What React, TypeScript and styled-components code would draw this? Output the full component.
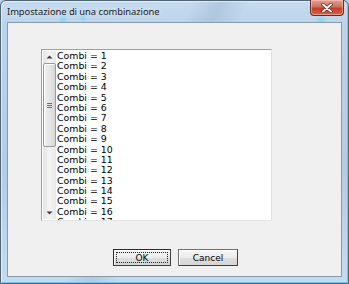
import styled, { createGlobalStyle } from "styled-components";

const GlobalStyle = createGlobalStyle`
  html, body {
    margin: 0;
    padding: 0;
    background: #b7cfe6;
  }
  #root {
    width: 349px;
    height: 284px;
  }
`;

const Window = styled.div`
  box-sizing: border-box;
  width: 349px;
  height: 284px;
  display: flex;
  flex-direction: column;
  padding: 0 6px 6px 6px;
  border: 1px solid #4f6475;
  border-radius: 6px 6px 0 0;
  background:
    radial-gradient(circle at 62px 19px, rgba(60, 220, 250, 0.55) 0, rgba(60, 220, 250, 0) 5px),
    radial-gradient(circle at 82px 17px, rgba(60, 220, 250, 0.5) 0, rgba(60, 220, 250, 0) 4px),
    radial-gradient(circle at 320px 20px, rgba(60, 220, 250, 0.5) 0, rgba(60, 220, 250, 0) 6px),
    linear-gradient(115deg, rgba(255, 255, 255, 0) 40%, rgba(140, 170, 200, 0.35) 46%, rgba(255, 255, 255, 0) 52%),
    linear-gradient(180deg, #c6dbee 0%, #bcd4ea 8%, #b3cde5 60%, #c5dbef 100%);
  box-shadow: inset 1px 1px 0 rgba(255, 255, 255, 0.55), inset -1px -1px 0 #6fc6ee;
`;

const TitleBar = styled.div`
  height: 21px;
  display: flex;
  align-items: flex-start;
  justify-content: space-between;
`;

const Title = styled.span`
  margin-top: 4px;
  font-family: "Noto Sans", "Open Sans", sans-serif;
  font-size: 9.4px;
  color: #1b1b1b;
  letter-spacing: -0.05px;
  text-shadow: 0 0 6px rgba(255, 255, 255, 0.9);
`;

const CloseButton = styled.div`
  box-sizing: border-box;
  width: 34px;
  height: 16px;
  margin-top: -1px;
  margin-right: -2px;
  display: flex;
  align-items: center;
  justify-content: center;
  border: 1px solid #6b2a22;
  border-top: none;
  border-radius: 0 0 4px 4px;
  background: linear-gradient(180deg, #e3a091 0%, #d0705d 45%, #c23f2a 55%, #d5644a 100%);
  box-shadow: inset 0 0 0 1px rgba(255, 210, 200, 0.5);
`;

const Client = styled.div`
  flex: 1;
  box-sizing: border-box;
  display: flex;
  flex-direction: column;
  border: 1px solid #8a9aa8;
  background: #f0f0f0;
  padding: 26px 0 0 33px;
`;

const ListBox = styled.div`
  box-sizing: border-box;
  width: 231px;
  height: 172px;
  display: flex;
  border-style: solid;
  border-width: 1px;
  border-color: #a0a0a0 #e3e3e3 #e3e3e3 #a0a0a0;
  background: #ffffff;
  padding: 1px;
  overflow: hidden;
`;

const ScrollBar = styled.div`
  width: 13px;
  flex: none;
  display: flex;
  flex-direction: column;
  background: linear-gradient(90deg, #e4e4e4 0%, #f4f4f4 50%, #e8e8e8 100%);
`;

const ArrowButton = styled.div`
  height: 12px;
  flex: none;
  display: flex;
  align-items: center;
  justify-content: center;
`;

const Thumb = styled.div`
  box-sizing: border-box;
  height: 84px;
  display: flex;
  align-items: center;
  justify-content: center;
  border: 1px solid #9a9a9a;
  border-radius: 2px;
  background: linear-gradient(90deg, #f2f2f2 0%, #e6e6e6 50%, #d6d6d6 100%);
  box-shadow: inset 1px 1px 0 #ffffff;
`;

const Track = styled.div`
  flex: 1;
`;

const Items = styled.div`
  flex: 1;
  padding-left: 1px;
  display: flex;
  flex-direction: column;
`;

const Item = styled.div`
  height: 10.4px;
  line-height: 10.4px;
  font-family: "DejaVu Sans", "Liberation Sans", sans-serif;
  font-size: 9.4px;
  color: #000000;
  white-space: nowrap;
`;

const ButtonRow = styled.div`
  display: flex;
  gap: 7px;
  margin-top: 28px;
  padding-left: 72px;
`;

const Button = styled.div<{ $default?: boolean; $width: number }>`
  box-sizing: border-box;
  width: ${(p) => p.$width}px;
  height: 17px;
  display: flex;
  align-items: center;
  justify-content: center;
  font-family: "DejaVu Sans", "Liberation Sans", sans-serif;
  font-size: 9px;
  color: #000000;
  border: 1px solid ${(p) => (p.$default ? "#2b2b2b" : "#707070")};
  border-right-color: #404040;
  border-bottom-color: #404040;
  background: linear-gradient(180deg, #f6f6f6 0%, #ececec 50%, #dedede 51%, #d6d6d6 100%);
  box-shadow: inset 1px 1px 0 #ffffff;
  position: relative;
`;

const FocusRing = styled.span`
  position: absolute;
  inset: 2px;
  border: 1px dotted #202020;
`;

export default function App() {
  const combis = Array.from({ length: 17 }, (_, i) => i + 1);
  return (
    <>
      <GlobalStyle />
      <Window>
        <TitleBar>
          <Title>Impostazione di una combinazione</Title>
          <CloseButton>
            <svg width="12" height="10" viewBox="0 0 12 10">
              <path d="M2 1.5 L10 8.5 M10 1.5 L2 8.5" stroke="#5a2219" strokeWidth="3.4" strokeLinecap="round" />
              <path d="M2 1.5 L10 8.5 M10 1.5 L2 8.5" stroke="#ffffff" strokeWidth="2" strokeLinecap="round" />
            </svg>
          </CloseButton>
        </TitleBar>
        <Client>
          <ListBox>
            <ScrollBar>
              <ArrowButton>
                <svg width="7" height="4" viewBox="0 0 7 4">
                  <path d="M0.5 3.5 L3.5 0.5 L6.5 3.5 Z" fill="#3c3c3c" />
                </svg>
              </ArrowButton>
              <Thumb>
                <svg width="5" height="5" viewBox="0 0 5 5">
                  <path d="M0 0.5 H5 M0 2.5 H5 M0 4.5 H5" stroke="#6e6e6e" strokeWidth="1" />
                </svg>
              </Thumb>
              <Track />
              <ArrowButton>
                <svg width="7" height="4" viewBox="0 0 7 4">
                  <path d="M0.5 0.5 L3.5 3.5 L6.5 0.5 Z" fill="#3c3c3c" />
                </svg>
              </ArrowButton>
            </ScrollBar>
            <Items>
              {combis.map((n) => (
                <Item key={n}>Combi = {n}</Item>
              ))}
            </Items>
          </ListBox>
          <ButtonRow>
            <Button $default $width={58}>
              <FocusRing />
              OK
            </Button>
            <Button $width={60}>Cancel</Button>
          </ButtonRow>
        </Client>
      </Window>
    </>
  );
}
